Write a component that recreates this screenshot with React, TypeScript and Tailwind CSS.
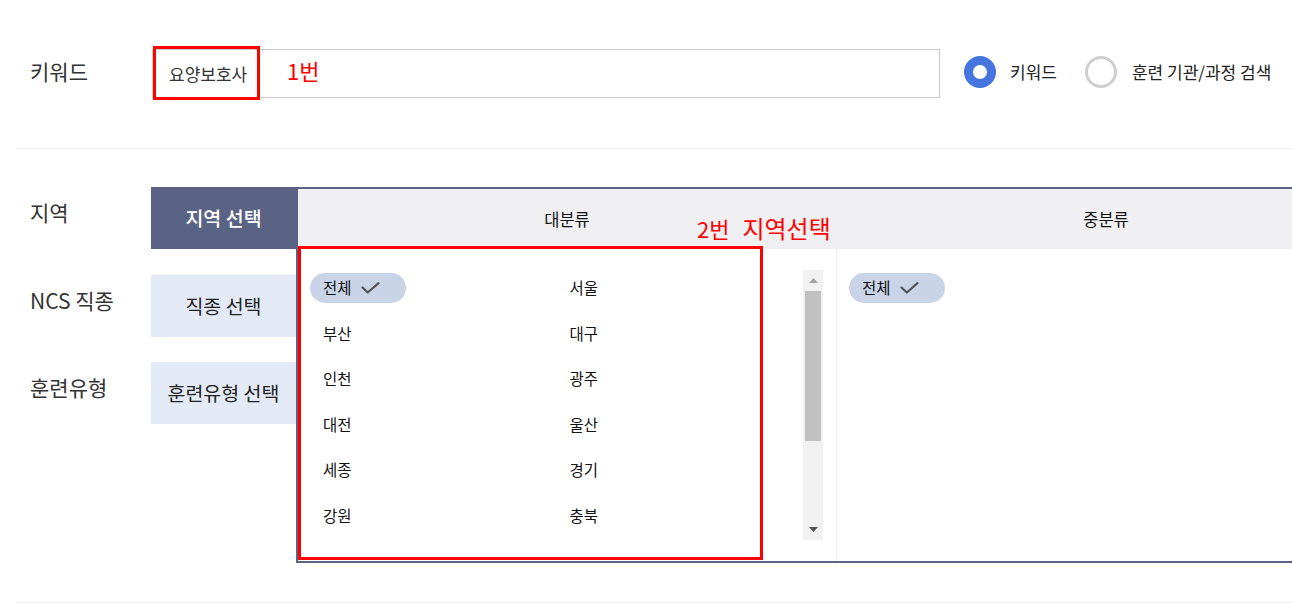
import React from 'react';

const regions = ['전체', '서울', '부산', '대구', '인천', '광주', '대전', '울산', '세종', '경기', '강원', '충북'];

const tabs = [
  { label: '지역', tab: '지역 선택', active: true },
  { label: 'NCS 직종', tab: '직종 선택', active: false },
  { label: '훈련유형', tab: '훈련유형 선택', active: false },
];

function CheckMark() {
  return (
    <svg width="19" height="12" viewBox="0 0 19 12" fill="none">
      <polyline points="1.5,5.5 6.8,10.5 17.5,1.2" stroke="#555" strokeWidth="2.2" strokeLinecap="round" strokeLinejoin="round" />
    </svg>
  );
}

function Chip({ name, selected }: { name: string; selected: boolean }) {
  return (
    <div
      className={`flex h-[30px] items-center pl-[13px] text-[15.5px] text-[#111] ${
        selected ? 'w-[96px] rounded-full bg-[#c9d4e8]' : ''
      }`}
    >
      <span>{name}</span>
      {selected && (
        <span className="ml-[9px] flex items-center">
          <CheckMark />
        </span>
      )}
    </div>
  );
}

function FakeScrollbar() {
  return (
    <div className="flex w-[20px] shrink-0 flex-col bg-[#f1f1f1]">
      <div className="flex h-[21px] items-center justify-center">
        <svg width="9" height="5" viewBox="0 0 9 5">
          <polygon points="0,5 4.5,0 9,5" fill="#a3a3a3" />
        </svg>
      </div>
      <div className="mx-[2px] h-[150px] bg-[#c1c1c1]" />
      <div className="flex-1" />
      <div className="flex h-[21px] items-center justify-center">
        <svg width="9" height="5" viewBox="0 0 9 5">
          <polygon points="0,0 9,0 4.5,5" fill="#505050" />
        </svg>
      </div>
    </div>
  );
}

export default function App() {
  return (
    <div
      className="relative h-[607px] w-[1292px] overflow-hidden bg-white"
      style={{ fontFamily: '"Noto Sans CJK KR", "Noto Sans", sans-serif' }}
    >
      {/* Keyword row */}
      <div className="flex h-[148px] items-start pl-[30px] pt-[49px]">
        <div className="flex h-[49px] w-[122px] items-center pb-[4px] text-[21px] text-[#333]">키워드</div>
        <div className="relative flex h-[49px] w-[788px] items-center border border-[#ccc] pl-[16px] text-[17px] text-[#333]">
          요양보호사
          <div className="absolute left-0 top-[-4px] h-[54px] w-[107px] border-[3px] border-[#ff0000]" />
          <span className="absolute left-[134px] top-[5px] text-[22px] leading-[30px] text-[#ff0000]">1번</span>
        </div>
        <div className="ml-[24px] flex h-[49px] items-center pb-[3px] text-[17px] text-[#222]">
          <div className="h-[32px] w-[32px] rounded-full border-[9px] border-[#4675e0] bg-white" />
          <span className="ml-[14px]">키워드</span>
          <div className="ml-[28px] h-[32px] w-[32px] rounded-full border-[3px] border-[#cdcdd2] bg-white" />
          <span className="ml-[15px]">훈련 기관/과정 검색</span>
        </div>
      </div>
      <div className="ml-[16px] h-px bg-[#eeeeee]" />

      {/* Filter section */}
      <div className="flex pl-[30px] pt-[38px]">
        <div className="flex flex-col gap-[25.5px]">
          {tabs.map((t) => (
            <div key={t.tab} className="flex">
              <div className="w-[121px] pt-[11px] text-[21px] leading-[28px] text-[#333]">{t.label}</div>
              <div
                className={`flex h-[62px] w-[145px] items-center justify-center text-[19.5px] ${
                  t.active ? 'bg-[#5b6385] font-medium text-white' : 'bg-[#e3eaf5] text-[#222]'
                }`}
              >
                {t.tab}
              </div>
            </div>
          ))}
        </div>

        <div className="relative w-[1080px] shrink-0 border-y-2 border-l-2 border-[#5b6385]">
          {/* Header */}
          <div className="flex h-[60px] bg-[#f0f0f3] text-[16.5px] text-[#111]">
            <div className="flex w-[538px] items-center justify-center">대분류</div>
            <div className="flex flex-1 items-center justify-center">중분류</div>
          </div>
          {/* Body */}
          <div className="flex h-[312px]">
            <div className="flex h-full w-[538px] py-[21px] pl-[12px] pr-[13px]">
              <div className="h-full flex-1 pt-[3px]">
                <div className="grid grid-cols-2 gap-y-[15.5px]">
                  {regions.map((r, i) => (
                    <Chip key={r} name={r} selected={i === 0} />
                  ))}
                </div>
              </div>
              <FakeScrollbar />
            </div>
            <div className="w-px bg-[#eeeeee]" />
            <div className="flex-1 pl-[12px] pt-[24px]">
              <Chip name="전체" selected />
            </div>
          </div>

          {/* Annotation */}
          <div className="absolute left-0 top-[57px] h-[314px] w-[465px] border-[3px] border-[#ff0000]" />
          <div className="absolute left-[399px] top-[24px] flex items-baseline text-[#ff0000]">
            <span className="text-[22px] leading-[30px]">2번</span>
            <span className="ml-[13px] text-[24px] leading-[30px]">지역선택</span>
          </div>
        </div>
      </div>

      <div className="ml-[16px] mt-[39px] h-px bg-[#eeeeee]" />
    </div>
  );
}
